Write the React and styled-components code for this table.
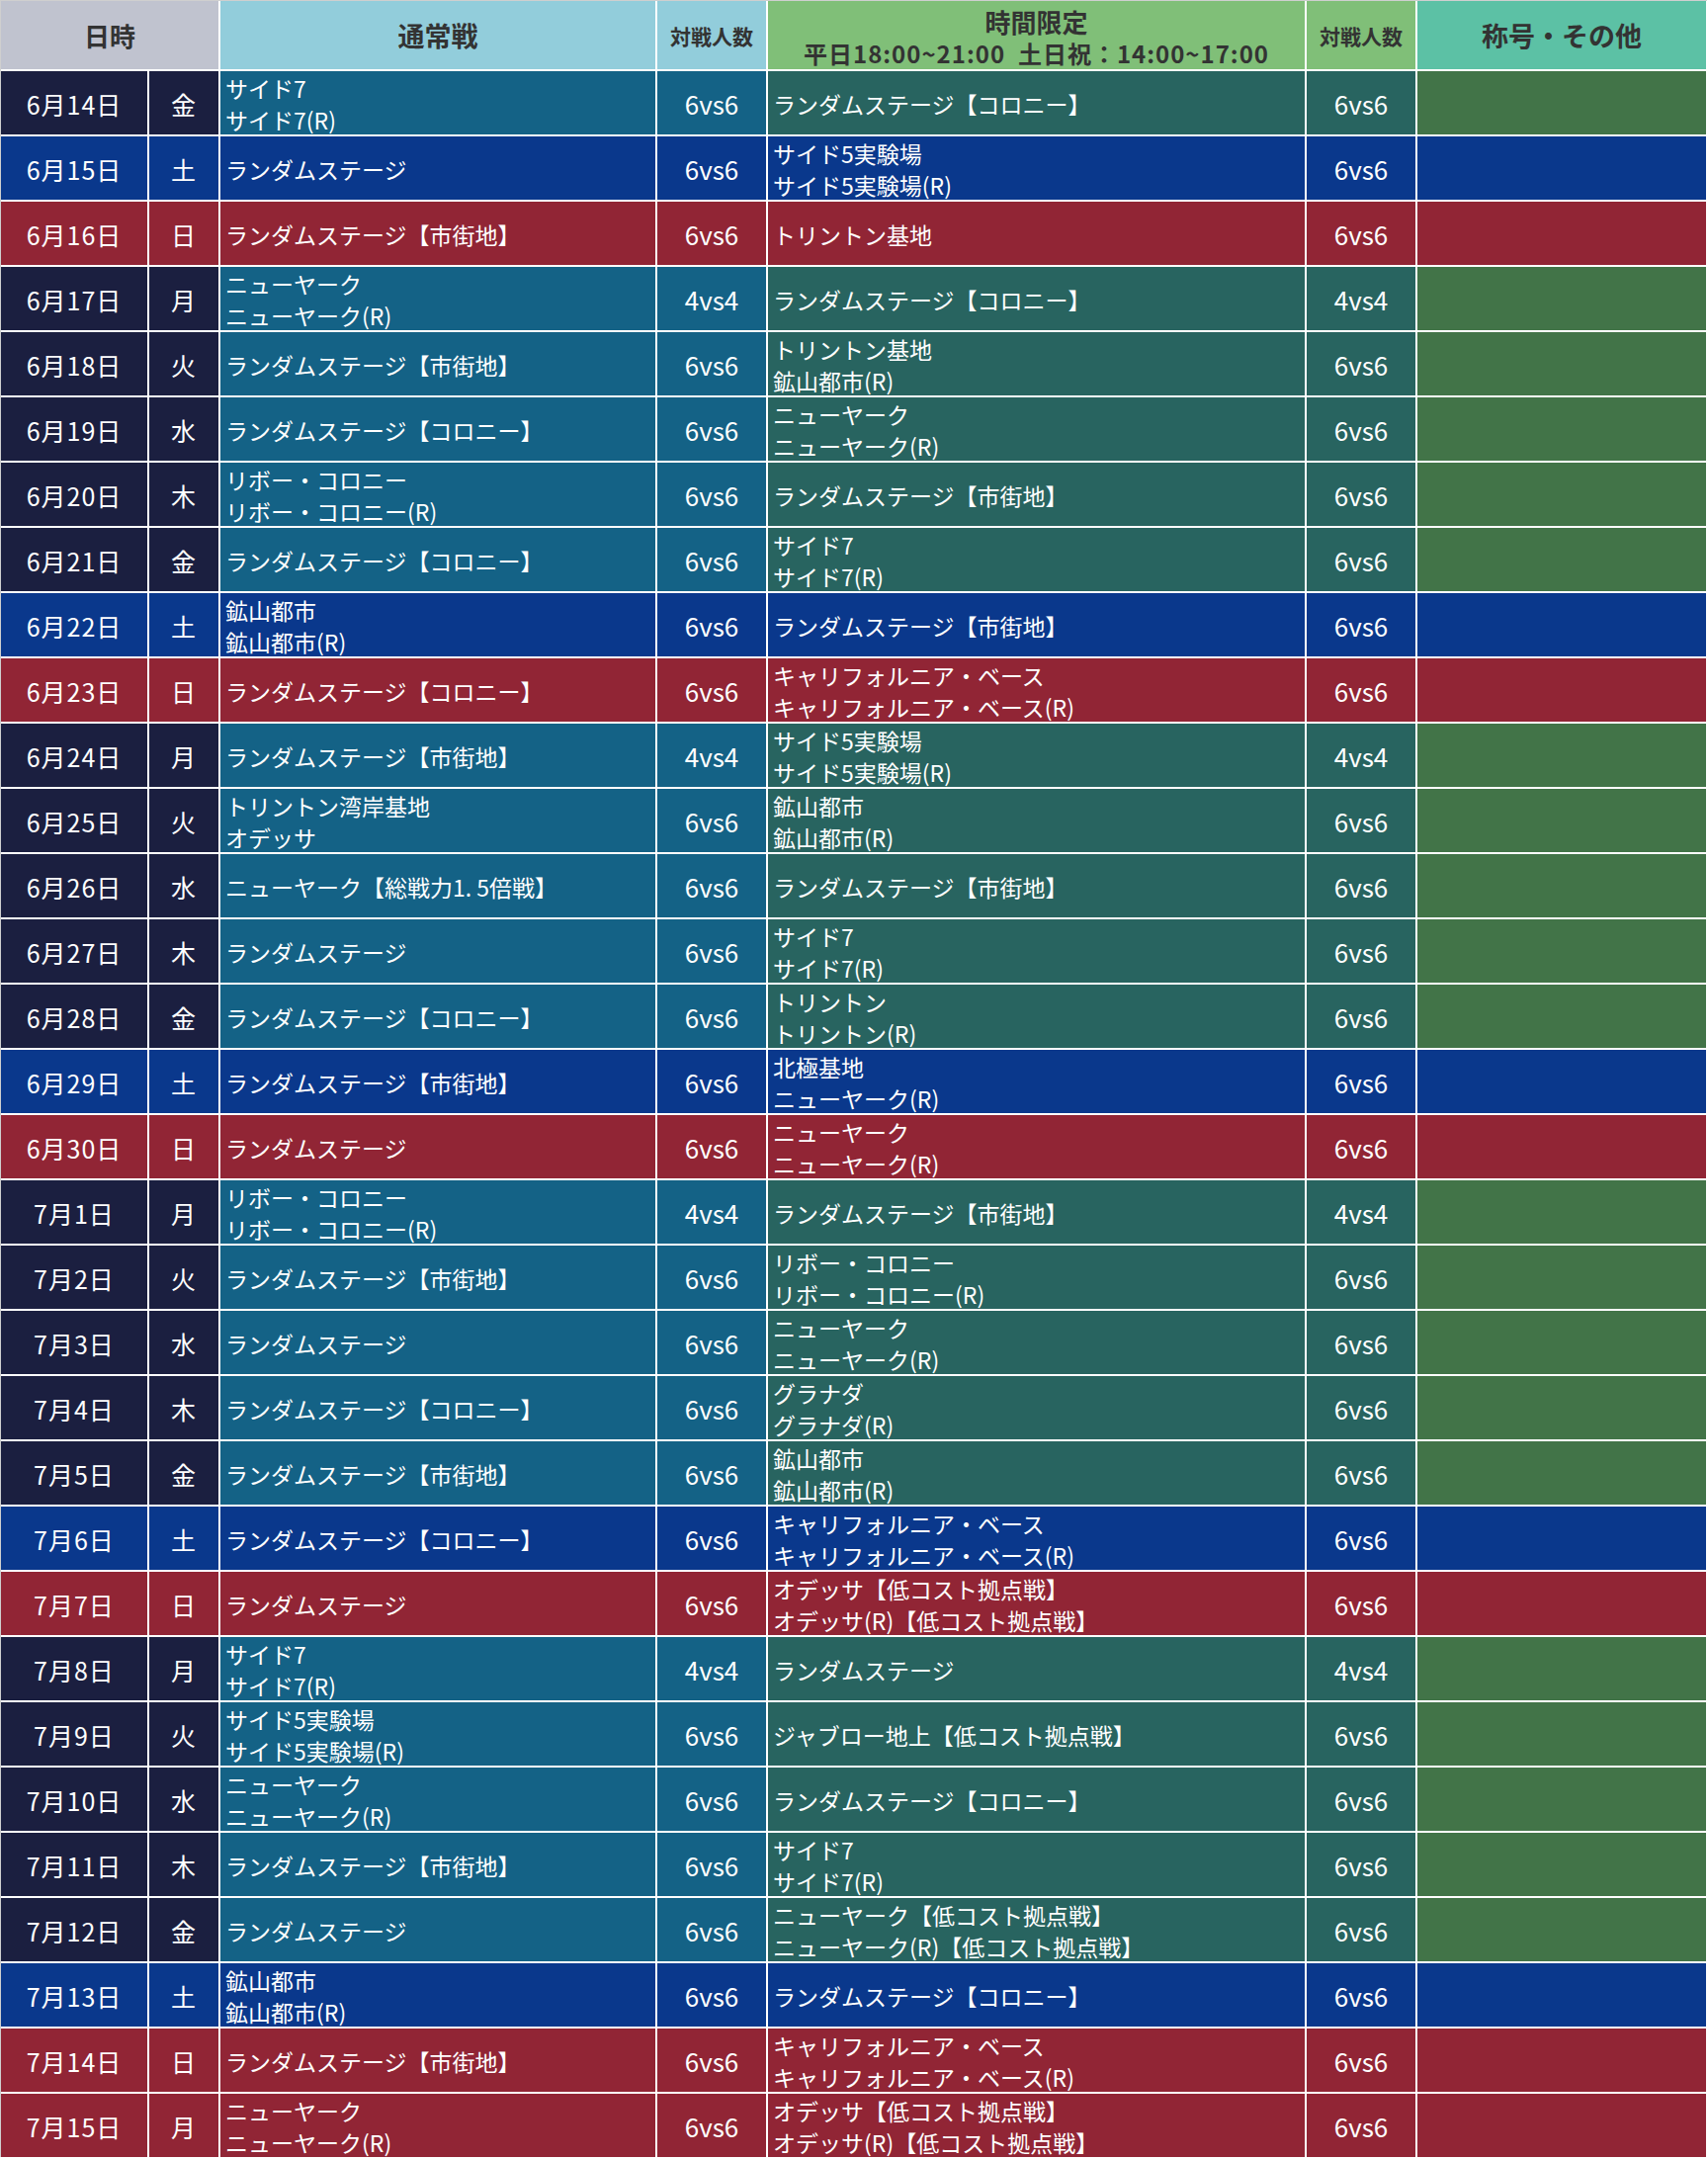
import React from "react";
import styled, { createGlobalStyle } from "styled-components";

const GlobalStyle = createGlobalStyle`
  html, body {
    margin: 0;
    padding: 0;
    background: #ffffff;
  }
  body {
    font-family: "Noto Sans CJK JP", "Noto Sans", sans-serif;
  }
`;

const palette = {
  w: { date: "#1b1f40", normal: "#146286", timed: "#286460", note: "#427448" },
  sat: { date: "#0a388c", normal: "#0a388c", timed: "#0a388c", note: "#0a388c" },
  sun: { date: "#912535", normal: "#912535", timed: "#912535", note: "#912535" },
};

const Sheet = styled.div`
  display: grid;
  grid-template-columns: 148px 70px 440px 110px 543px 110px 292px;
  grid-template-rows: 69px;
  grid-auto-rows: 64px;
  gap: 2px;
  width: 1727px;
  box-sizing: border-box;
  padding-right: 2px;
  border-top: 1px solid #cfcfcf;
  border-left: 1px solid #cfcfcf;
  background: #ffffff;
`;

const HeadCell = styled.div`
  grid-column: span ${(p) => p.$span || 1};
  background: ${(p) => p.$bg};
  color: #333333;
  font-weight: 700;
  font-size: ${(p) => p.$size || 27}px;
  display: flex;
  flex-direction: column;
  align-items: center;
  justify-content: center;
  text-align: center;
  line-height: 32px;
  padding-top: ${(p) => p.$pt || 0}px;
  box-sizing: border-box;
  white-space: nowrap;
`;

const SubLine = styled.span`
  font-size: 24px;
  letter-spacing: 1px;
`;

const Cell = styled.div`
  background: ${(p) => p.$bg};
  color: #ffffff;
  font-size: ${(p) => p.$size || 23}px;
  line-height: 32px;
  display: flex;
  flex-direction: column;
  justify-content: center;
  align-items: ${(p) => (p.$center ? "center" : "flex-start")};
  padding: 1px 0 0 ${(p) => (p.$center ? 0 : 5)}px;
  box-sizing: border-box;
  white-space: nowrap;
  overflow: visible;
`;

const DateText = styled.span`
  font-size: 25px;
  letter-spacing: 1px;
`;

const rows = [
  ["6月14日", "金", "w", ["サイド7", "サイド7(R)"], "6vs6", ["ランダムステージ【コロニー】"], "6vs6"],
  ["6月15日", "土", "sat", ["ランダムステージ"], "6vs6", ["サイド5実験場", "サイド5実験場(R)"], "6vs6"],
  ["6月16日", "日", "sun", ["ランダムステージ【市街地】"], "6vs6", ["トリントン基地"], "6vs6"],
  ["6月17日", "月", "w", ["ニューヤーク", "ニューヤーク(R)"], "4vs4", ["ランダムステージ【コロニー】"], "4vs4"],
  ["6月18日", "火", "w", ["ランダムステージ【市街地】"], "6vs6", ["トリントン基地", "鉱山都市(R)"], "6vs6"],
  ["6月19日", "水", "w", ["ランダムステージ【コロニー】"], "6vs6", ["ニューヤーク", "ニューヤーク(R)"], "6vs6"],
  ["6月20日", "木", "w", ["リボー・コロニー", "リボー・コロニー(R)"], "6vs6", ["ランダムステージ【市街地】"], "6vs6"],
  ["6月21日", "金", "w", ["ランダムステージ【コロニー】"], "6vs6", ["サイド7", "サイド7(R)"], "6vs6"],
  ["6月22日", "土", "sat", ["鉱山都市", "鉱山都市(R)"], "6vs6", ["ランダムステージ【市街地】"], "6vs6"],
  ["6月23日", "日", "sun", ["ランダムステージ【コロニー】"], "6vs6", ["キャリフォルニア・ベース", "キャリフォルニア・ベース(R)"], "6vs6"],
  ["6月24日", "月", "w", ["ランダムステージ【市街地】"], "4vs4", ["サイド5実験場", "サイド5実験場(R)"], "4vs4"],
  ["6月25日", "火", "w", ["トリントン湾岸基地", "オデッサ"], "6vs6", ["鉱山都市", "鉱山都市(R)"], "6vs6"],
  ["6月26日", "水", "w", ["ニューヤーク【総戦力1. 5倍戦】"], "6vs6", ["ランダムステージ【市街地】"], "6vs6"],
  ["6月27日", "木", "w", ["ランダムステージ"], "6vs6", ["サイド7", "サイド7(R)"], "6vs6"],
  ["6月28日", "金", "w", ["ランダムステージ【コロニー】"], "6vs6", ["トリントン", "トリントン(R)"], "6vs6"],
  ["6月29日", "土", "sat", ["ランダムステージ【市街地】"], "6vs6", ["北極基地", "ニューヤーク(R)"], "6vs6"],
  ["6月30日", "日", "sun", ["ランダムステージ"], "6vs6", ["ニューヤーク", "ニューヤーク(R)"], "6vs6"],
  ["7月1日", "月", "w", ["リボー・コロニー", "リボー・コロニー(R)"], "4vs4", ["ランダムステージ【市街地】"], "4vs4"],
  ["7月2日", "火", "w", ["ランダムステージ【市街地】"], "6vs6", ["リボー・コロニー", "リボー・コロニー(R)"], "6vs6"],
  ["7月3日", "水", "w", ["ランダムステージ"], "6vs6", ["ニューヤーク", "ニューヤーク(R)"], "6vs6"],
  ["7月4日", "木", "w", ["ランダムステージ【コロニー】"], "6vs6", ["グラナダ", "グラナダ(R)"], "6vs6"],
  ["7月5日", "金", "w", ["ランダムステージ【市街地】"], "6vs6", ["鉱山都市", "鉱山都市(R)"], "6vs6"],
  ["7月6日", "土", "sat", ["ランダムステージ【コロニー】"], "6vs6", ["キャリフォルニア・ベース", "キャリフォルニア・ベース(R)"], "6vs6"],
  ["7月7日", "日", "sun", ["ランダムステージ"], "6vs6", ["オデッサ【低コスト拠点戦】", "オデッサ(R)【低コスト拠点戦】"], "6vs6"],
  ["7月8日", "月", "w", ["サイド7", "サイド7(R)"], "4vs4", ["ランダムステージ"], "4vs4"],
  ["7月9日", "火", "w", ["サイド5実験場", "サイド5実験場(R)"], "6vs6", ["ジャブロー地上【低コスト拠点戦】"], "6vs6"],
  ["7月10日", "水", "w", ["ニューヤーク", "ニューヤーク(R)"], "6vs6", ["ランダムステージ【コロニー】"], "6vs6"],
  ["7月11日", "木", "w", ["ランダムステージ【市街地】"], "6vs6", ["サイド7", "サイド7(R)"], "6vs6"],
  ["7月12日", "金", "w", ["ランダムステージ"], "6vs6", ["ニューヤーク【低コスト拠点戦】", "ニューヤーク(R)【低コスト拠点戦】"], "6vs6"],
  ["7月13日", "土", "sat", ["鉱山都市", "鉱山都市(R)"], "6vs6", ["ランダムステージ【コロニー】"], "6vs6"],
  ["7月14日", "日", "sun", ["ランダムステージ【市街地】"], "6vs6", ["キャリフォルニア・ベース", "キャリフォルニア・ベース(R)"], "6vs6"],
  ["7月15日", "月", "sun", ["ニューヤーク", "ニューヤーク(R)"], "6vs6", ["オデッサ【低コスト拠点戦】", "オデッサ(R)【低コスト拠点戦】"], "6vs6"],
];

const Lines = ({ items }) => items.map((t, i) => <span key={i}>{t}</span>);

export default function App() {
  return (
    <>
      <GlobalStyle />
      <Sheet>
        <HeadCell $span={2} $bg="#c0c3cf" $size={26}>日時</HeadCell>
        <HeadCell $bg="#92cddb">通常戦</HeadCell>
        <HeadCell $bg="#92cddb" $size={21}>対戦人数</HeadCell>
        <HeadCell $bg="#80bf78" $size={26} $pt={4}>
          <span>時間限定</span>
          <SubLine>平日18:00~21:00&nbsp;&nbsp;土日祝：14:00~17:00</SubLine>
        </HeadCell>
        <HeadCell $bg="#80bf78" $size={21}>対戦人数</HeadCell>
        <HeadCell $bg="#5cc1a5">称号・その他</HeadCell>
        {rows.map(([date, day, type, normal, n1, timed, n2]) => {
          const c = palette[type];
          return (
            <React.Fragment key={date}>
              <Cell $bg={c.date} $center><DateText>{date}</DateText></Cell>
              <Cell $bg={c.date} $center><DateText>{day}</DateText></Cell>
              <Cell $bg={c.normal}><Lines items={normal} /></Cell>
              <Cell $bg={c.normal} $center $size={26}>{n1}</Cell>
              <Cell $bg={c.timed}><Lines items={timed} /></Cell>
              <Cell $bg={c.timed} $center $size={26}>{n2}</Cell>
              <Cell $bg={c.note} />
            </React.Fragment>
          );
        })}
      </Sheet>
    </>
  );
}
